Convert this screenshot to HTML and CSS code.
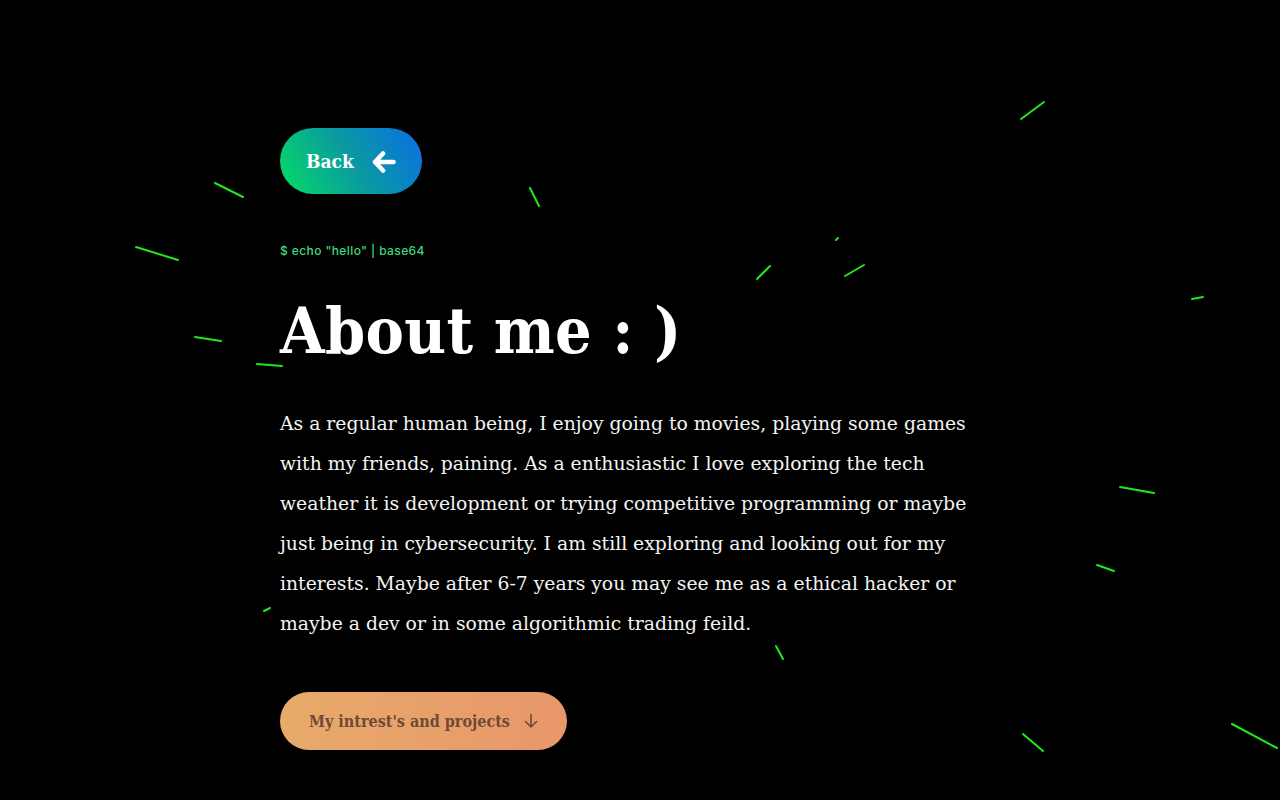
FILE: index.html
```html
<!DOCTYPE html>
<html lang="en">
<head>
<meta charset="utf-8">
<title>About me</title>
<link rel="stylesheet" href="styles.css">
</head>
<body>
<svg class="rain" width="1280" height="800" viewBox="0 0 1280 800">
  <g stroke="#1fe81f" stroke-width="2" stroke-linecap="round">
    <line x1="1021" y1="119" x2="1044" y2="102"/>
    <line x1="215" y1="183" x2="243" y2="197"/>
    <line x1="530" y1="188" x2="539" y2="206"/>
    <line x1="136" y1="247" x2="178" y2="260"/>
    <line x1="836" y1="240" x2="838" y2="238"/>
    <line x1="757" y1="279" x2="770" y2="266"/>
    <line x1="845" y1="276" x2="864" y2="265"/>
    <line x1="1192" y1="299" x2="1203" y2="297"/>
    <line x1="195" y1="337" x2="221" y2="341"/>
    <line x1="257" y1="364" x2="282" y2="366"/>
    <line x1="1120" y1="487" x2="1154" y2="493"/>
    <line x1="1097" y1="565" x2="1114" y2="571"/>
    <line x1="264" y1="611" x2="270" y2="608"/>
    <line x1="776" y1="646" x2="783" y2="659"/>
    <line x1="1023" y1="734" x2="1043" y2="751"/>
    <line x1="1232" y1="724" x2="1277" y2="748"/>
  </g>
</svg>
<main class="page">
  <a class="back-btn" href="#">
    <span>Back</span>
    <svg class="back-icon" width="24" height="22" viewBox="0 0 24 22"><path d="M11 2.5 L3 11 L11 19.5 M3 11 H21.5" fill="none" stroke="#fff" stroke-width="4.6" stroke-linecap="round" stroke-linejoin="round"/></svg>
  </a>
  <p class="echo">$ echo "hello" | base64</p>
  <h1 class="title">About me : )</h1>
  <p class="bio">As a regular human being, I enjoy going to movies, playing some games with my friends, paining. As a enthusiastic I love exploring the tech weather it is development or trying competitive programming or maybe just being in cybersecurity. I am still exploring and looking out for my interests. Maybe after 6-7 years you may see me as a ethical hacker or maybe a dev or in some algorithmic trading feild.</p>
  <a class="more-btn" href="#">
    <span>My intrest's and projects</span>
    <svg width="14" height="16" viewBox="0 0 14 16"><path d="M7 1.5 V14 M1.5 8.5 L7 14 L12.5 8.5" fill="none" stroke="#6e4a36" stroke-width="1.6" stroke-linecap="round" stroke-linejoin="round"/></svg>
  </a>
</main>
</body>
</html>
```

FILE: styles.css
```css
html, body {
  margin: 0;
  padding: 0;
  background: #000;
  height: 800px;
  overflow: hidden;
}
.rain {
  position: absolute;
  left: 0;
  top: 0;
  z-index: 0;
}
.page {
  position: relative;
  z-index: 1;
  width: 720px;
  margin: 0 auto;
  padding-top: 128px;
  display: flex;
  flex-direction: column;
  align-items: flex-start;
}
.back-btn {
  display: flex;
  align-items: center;
  gap: 18px;
  height: 66px;
  width: 142px;
  box-sizing: border-box;
  padding-left: 26px;
  border-radius: 33px;
  background: linear-gradient(60deg, #06dd62 0%, #0a9aa0 50%, #0a6ee6 100%);
  color: #fff;
  text-decoration: none;
  font-family: "DejaVu Serif Condensed", "DejaVu Serif", serif;
  font-stretch: condensed;
  font-weight: bold;
  font-size: 19px;
}
.back-icon { margin-top: 1px; }
.echo {
  margin: 49px 0 0;
  font-family: Inter, "Noto Sans", sans-serif;
  font-size: 12px;
  font-weight: 500;
  line-height: 16px;
  color: #3fd87e;
  letter-spacing: 0.4px;
}
.title {
  margin: 32px 0 0;
  font-family: "DejaVu Serif Condensed", "DejaVu Serif", serif;
  font-stretch: condensed;
  font-weight: bold;
  font-size: 64px;
  line-height: 80px;
  color: #fff;
  letter-spacing: 0.3px;
}
.bio {
  margin: 33px 0 0;
  font-family: "DejaVu Serif", serif;
  font-size: 18.8px;
  line-height: 40px;
  color: #f4f4f4;
  width: 712px;
}
.more-btn {
  margin-top: 48px;
  display: flex;
  align-items: center;
  gap: 14px;
  height: 58px;
  padding: 0 29px;
  border-radius: 29px;
  background: linear-gradient(90deg, #e8ab6a 0%, #e8966b 100%);
  color: #6e4a36;
  text-decoration: none;
  font-family: "DejaVu Serif Condensed", "DejaVu Serif", serif;
  font-stretch: condensed;
  font-weight: bold;
  font-size: 16px;
}
```
